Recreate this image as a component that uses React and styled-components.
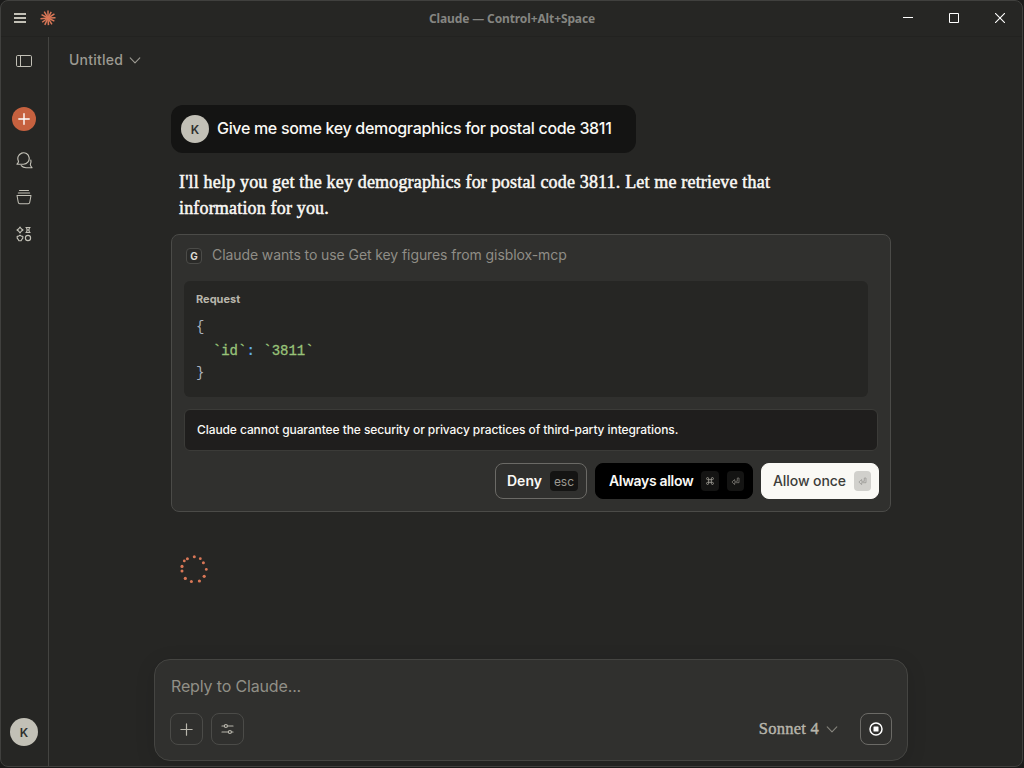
import React from "react";
import styled, { createGlobalStyle } from "styled-components";

const sans = `Inter, "Liberation Sans", sans-serif`;
const serif = `"Liberation Serif", serif`;
const mono = `"Liberation Mono", monospace`;

const GlobalStyle = createGlobalStyle`
  * { box-sizing: border-box; }
  body { margin: 0; background: #1b1b1a; overflow: hidden; }
  button { margin: 0; padding: 0; border: 0; background: none; font: inherit; color: inherit; }
  svg { display: block; flex: none; }
`;

const Backdrop = styled.div`
  width: 1024px;
  height: 768px;
  padding: 0 1px 1px 0;
  background: #1b1b1a;
`;

const Window = styled.div`
  display: flex;
  flex-direction: column;
  height: 767px;
  border: 1px solid #40403e;
  border-radius: 8px;
  background: #262624;
  color: #faf9f5;
  font-family: ${sans};
  overflow: hidden;
`;

const TitleBar = styled.header`
  display: grid;
  grid-template-columns: 1fr auto 1fr;
  align-items: center;
  height: 36px;
  flex: none;
  padding-bottom: 1px;
  border-bottom: 1px solid #222220;
`;

const TitleLeft = styled.div`
  display: flex;
  align-items: center;
  gap: 13px;
  padding-left: 12px;
`;

const Title = styled.div`
  padding: 1px 0 0 1px;
  font: 700 12px/16px "Noto Sans", sans-serif;
  letter-spacing: -0.12px;
  color: #858581;
`;

const WindowControls = styled.div`
  display: flex;
  justify-content: flex-end;
  margin-right: -1px;
`;

const ControlButton = styled.button`
  display: grid;
  place-items: center;
  width: 46px;
  height: 34px;
`;

const Shell = styled.div`
  display: flex;
  flex: 1;
  min-height: 0;
`;

const Sidebar = styled.nav`
  display: flex;
  flex-direction: column;
  align-items: center;
  width: 48px;
  flex: none;
  padding: 15px 1px 20px 0;
  border-right: 1px solid #444441;
  color: #c2c0b6;
`;

const SideButton = styled.button`
  display: grid;
  place-items: center;
  width: 32px;
  height: 18px;
  margin-top: ${(p) => p.$gap || 0}px;
`;

const NewChat = styled(SideButton)`
  width: 24px;
  height: 24px;
  border-radius: 50%;
  background: #c6613f;
  color: #fff;
`;

const Avatar = styled.div`
  display: grid;
  place-items: center;
  width: 28px;
  height: 28px;
  flex: none;
  border-radius: 50%;
  background: #c2c0b6;
  color: #30302e;
  font-size: 12px;
  font-weight: 600;
`;

const SidebarFoot = styled.div`
  margin-top: auto;
`;

const Main = styled.main`
  display: flex;
  flex-direction: column;
  flex: 1;
  min-width: 0;
`;

const ChatHeader = styled.div`
  display: flex;
  align-items: center;
  gap: 6px;
  height: 46px;
  padding: 0 0 0 20px;
  color: #9c9a92;
  font-size: 14px;
  font-weight: 500;
  letter-spacing: 0.22px;
`;

const ChatTitle = styled.span`
  padding-bottom: 2px;
`;

const Thread = styled.section`
  display: flex;
  flex-direction: column;
  align-items: flex-start;
  width: 720px;
  margin: 22px 0 0 122px;
`;

const UserMessage = styled.div`
  display: flex;
  align-items: center;
  gap: 8px;
  width: 465px;
  height: 48px;
  padding: 0 10px;
  border-radius: 12px;
  background: #141413;
  white-space: nowrap;
`;

const UserText = styled.span`
  font-size: 16px;
  font-weight: 500;
  letter-spacing: -0.317px;
  line-height: 24px;
  padding-bottom: 2px;
`;

const Reply = styled.p`
  margin: 16px 0 0;
  padding-left: 8px;
  width: 640px;
  font: 18px/26px ${serif};
  letter-spacing: 0.175px;
  -webkit-text-stroke: 0.5px currentColor;
`;

const ToolCard = styled.div`
  width: 720px;
  height: 278px;
  margin-top: 13px;
  padding: 12px;
  border: 1px solid #4b4b48;
  border-radius: 8px;
  background: #30302e;
`;

const ToolHeader = styled.div`
  display: flex;
  align-items: center;
  gap: 10px;
  height: 18px;
  padding-left: 2px;
  color: #8f8d86;
  font-size: 14px;
  letter-spacing: -0.09px;
`;

const ToolName = styled.span`
  padding-bottom: 3px;
`;

const ToolBadge = styled.span`
  display: grid;
  place-items: center;
  width: 16px;
  height: 16px;
  border: 1px solid #4b4b48;
  border-radius: 4px;
  background: #2a2a28;
  color: #dddbd2;
  font-size: 10px;
  font-weight: 700;
  letter-spacing: 0;
`;

const Request = styled.div`
  width: 684px;
  height: 116px;
  margin-top: 16px;
  padding: 11px 12px;
  border-radius: 6px;
  background: #262624;
`;

const RequestLabel = styled.div`
  color: #b8b6ac;
  font-size: 11px;
  font-weight: 700;
  line-height: 14px;
`;

const Code = styled.pre`
  margin: 9px 0 0;
  color: #abb2bf;
  font: 14px/22px ${mono};
`;

const CodeLine = styled.div`
  height: ${(p) => p.$h}px;
  line-height: ${(p) => p.$h}px;
`;

const Str = styled.span`
  color: #98c379;
  -webkit-text-stroke: 0.3px currentColor;
`;

const Op = styled.span`
  color: #61afef;
  font-weight: 700;
`;

const Warning = styled.div`
  display: flex;
  align-items: center;
  width: 694px;
  height: 42px;
  margin-top: 12px;
  padding: 0 12px 1px;
  border: 1px solid #3b3b38;
  border-radius: 6px;
  background: #1f1e1d;
  font-size: 12px;
  font-weight: 500;
  letter-spacing: -0.085px;
`;

const Actions = styled.div`
  display: flex;
  justify-content: flex-end;
  gap: 8px;
  margin: 12px -1px 0 0;
`;

const looks = {
  outline: "background:#30302e;border:1px solid #6b6a66;color:#faf9f5;",
  dark: "background:#000;border:1px solid #000;color:#faf9f5;",
  light: "background:#faf9f5;border:1px solid #faf9f5;color:#3d3d3a;",
};

const ActionButton = styled.button`
  display: flex;
  align-items: center;
  width: ${(p) => p.$w}px;
  height: 36px;
  padding-left: ${(p) => p.$pad || 11}px;
  border-radius: 8px;
  ${(p) => looks[p.$look]}
  font-size: 14px;
  font-weight: ${(p) => (p.$look === "light" ? 500 : 600)};
  letter-spacing: ${(p) => p.$track || 0}px;
  white-space: nowrap;
`;

const ActionLabel = styled.span`
  padding-bottom: 2px;
`;

const Key = styled.kbd`
  display: grid;
  place-items: center;
  width: ${(p) => p.$w || 17}px;
  height: 20px;
  margin-left: 8px;
  border-radius: 4px;
  background: ${(p) => (p.$light ? "#d1d0cc" : "#141413")};
  color: ${(p) => (p.$light ? "#8b8a86" : "#9c9a92")};
  font: 400 12px ${sans};
  letter-spacing: 0;
`;

const SpinnerBox = styled.div`
  margin: 43px 0 0 9px;
`;

const Composer = styled.section`
  display: flex;
  flex-direction: column;
  width: 754px;
  height: 102px;
  margin: auto 0 5px 105px;
  padding: 16px 15px 15px;
  border: 1px solid #454542;
  border-radius: 16px;
  background: #30302e;
  box-shadow: 0 4px 20px rgba(0, 0, 0, 0.12);
`;

const Placeholder = styled.div`
  padding-left: 1px;
  color: #918f87;
  font-size: 16px;
  letter-spacing: -0.15px;
  line-height: 21px;
`;

const Tools = styled.div`
  display: flex;
  align-items: center;
  gap: 8px;
  margin-top: auto;
`;

const ToolButton = styled.button`
  display: grid;
  place-items: center;
  width: ${(p) => p.$w || 33}px;
  height: 32px;
  border: 1px solid ${(p) => (p.$strong ? "#6b6a66" : "#4b4b48")};
  border-radius: 8px;
  color: #b8b6ac;
`;

const Model = styled.button`
  display: flex;
  align-items: center;
  gap: 7px;
  margin: 0 14px 0 auto;
  color: #b8b6ac;
  font: 16.5px ${serif};
  letter-spacing: 0.24px;
  -webkit-text-stroke: 0.4px currentColor;
`;

const Chevron = ({ color = "#9c9a92" }) => (
  <svg width="12" height="8" viewBox="0 0 12 8" fill="none" stroke={color} strokeWidth="1.1" strokeLinecap="round" strokeLinejoin="round">
    <path d="M1.2 1.9 6 6.800 10.8 1.9" />
  </svg>
);

const rays = [
  [0, 7.4], [28, 6.9], [58, 7.6], [88, 7.5], [116, 7.1], [148, 7.4],
  [176, 7.1], [205, 7.6], [234, 7.2], [264, 7.6], [298, 7.3], [330, 7.5],
];

const Burst = () => (
  <svg width="16" height="16" viewBox="0 0 16 16" stroke="#d97757" strokeWidth="1.5" strokeLinecap="butt">
    {rays.map(([angle, r]) => (
      <path key={angle} d={`M8 8V${8 - r}`} transform={`rotate(${angle} 8 8)`} />
    ))}
  </svg>
);

const Plus = ({ size = 12, weight = 1.5 }) => (
  <svg width={size} height={size} viewBox="0 0 12 12" stroke="currentColor" strokeWidth={weight} strokeLinecap="round">
    <path d="M6 .8v10.4M.8 6h10.4" />
  </svg>
);

const ReturnGlyph = () => (
  <svg width="9" height="9" viewBox="0 0 9 9" fill="none" stroke="currentColor" strokeWidth="0.7" opacity="0.85">
    <path d="M6.3 1H8v4.7H3.6V7.6L.9 5l2.7-2.5v1.8h2.7z" />
  </svg>
);

const CommandGlyph = () => (
  <svg width="8" height="8" viewBox="0 0 9 9" fill="none" stroke="currentColor" strokeWidth="1">
    <path d="M3 3V2a1.2 1.2 0 1 0-1.2 1H7.2A1.2 1.2 0 1 0 6 2v5a1.2 1.2 0 1 0 1.2-1H1.8A1.2 1.2 0 1 0 3 7z" />
  </svg>
);

const dots = [
  [14.3, 1.8, 1.5], [20.3, 3.7, 1.4], [23.4, 7.7, 1.5], [26.3, 14.4, 1.4],
  [24.2, 21.3, 1.6], [19.4, 26, 1.6], [11.4, 26.4, 1.5], [5.3, 23.4, 1.6],
  [2, 16, 1.5], [2, 11.4, 1.6], [4.3, 5.9, 1.4], [7.4, 3.8, 1.5],
];

const Spinner = () => (
  <svg width="30" height="30" viewBox="0 0 30 30" fill="#d97757">
    {dots.map(([x, y, r]) => (
      <circle key={`${x}-${y}`} cx={x} cy={y} r={r} />
    ))}
  </svg>
);

export default function App() {
  return (
    <Backdrop>
      <GlobalStyle />
      <Window>
        <TitleBar>
          <TitleLeft>
            <svg width="14" height="12" viewBox="0 0 14 12" fill="#c2c0b6">
              <path d="M1 1h12v2H1zM1 5h12v2H1zM1 9h12v2H1z" />
            </svg>
            <Burst />
          </TitleLeft>
          <Title>Claude — Control+Alt+Space</Title>
          <WindowControls>
            <ControlButton aria-label="Minimize">
              <svg width="10" height="10" fill="#fff"><path d="M0 4h10v1H0z" /></svg>
            </ControlButton>
            <ControlButton aria-label="Maximize">
              <svg width="10" height="10" fill="none" stroke="#fff"><path d="M.5.5h9v9h-9z" /></svg>
            </ControlButton>
            <ControlButton aria-label="Close">
              <svg width="10" height="10" fill="none" stroke="#fff" strokeWidth="1.1"><path d="m0 0 10 10M10 0 0 10" /></svg>
            </ControlButton>
          </WindowControls>
        </TitleBar>
        <Shell>
          <Sidebar>
            <SideButton aria-label="Toggle sidebar">
              <svg width="16" height="12" fill="none" stroke="currentColor">
                <rect x=".5" y=".5" width="15" height="11" rx="1.2" />
                <path d="M4.5.5v11" />
              </svg>
            </SideButton>
            <NewChat aria-label="New chat" $gap={37}>
              <Plus weight={1.4} />
            </NewChat>
            <SideButton aria-label="Chats" $gap={20}>
              <svg width="17" height="17" viewBox="0 0 17 17" fill="none" stroke="currentColor" strokeWidth="1.15" strokeLinejoin="round" strokeLinecap="round">
                <path d="M1 12.2h6.5a5.7 5.7 0 1 0-5-3c.1.9-.5 1.900-1.5 3z" />
                <path d="M14.8 8c.5 1.7.2 3.3-.5 4.5.2 1.2.8 2.2 1.7 3.2h-5.5c-2.2.1-4-.5-5.3-2" />
              </svg>
            </SideButton>
            <SideButton aria-label="Projects" $gap={19}>
              <svg width="16" height="16" viewBox="0 0 16 16" fill="none" stroke="currentColor" strokeWidth="1.05" strokeLinejoin="round" strokeLinecap="round">
                <path d="M3.5 1.5h9M2.3 4h11.4M1 6.5h14l-1.3 7a1.5 1.5 0 0 1-1.5 1.2H3.8a1.5 1.5 0 0 1-1.5-1.2z" />
              </svg>
            </SideButton>
            <SideButton aria-label="Artifacts" $gap={19}>
              <svg width="16" height="16" viewBox="0 0 16 16" fill="none" stroke="currentColor" strokeWidth="1.15" strokeLinejoin="round">
                <path d="M4 1 5.2 2.8 7 4 5.2 5.2 4 7 2.8 5.2 1 4l1.8-1.2z" />
                <path d="M9.5 1.5h5M9.5 6.5h5M10.5 1.5c.8 1.6.8 3.4 0 5M13.5 1.5c-.8 1.6-.8 3.4 0 5M10.8 4h2.4" />
                <path d="m4 9.3 1.3.8 1.5.2v1.9l-.9 1.1-.8 1.4H2.9l-.8-1.400-.9-1.1v-1.9l1.5-.2z" />
                <circle cx="12" cy="12" r="2.6" />
              </svg>
            </SideButton>
            <SidebarFoot>
              <Avatar>K</Avatar>
            </SidebarFoot>
          </Sidebar>
          <Main>
            <ChatHeader>
              <ChatTitle>Untitled</ChatTitle>
              <Chevron />
            </ChatHeader>
            <Thread>
              <UserMessage>
                <Avatar>K</Avatar>
                <UserText>Give me some key demographics for postal code 3811</UserText>
              </UserMessage>
              <Reply>
                I'll help you get the key demographics for postal code 3811. Let me retrieve that
                information for you.
              </Reply>
              <ToolCard>
                <ToolHeader>
                  <ToolBadge>G</ToolBadge>
                  <ToolName>Claude wants to use Get key figures from gisblox-mcp</ToolName>
                </ToolHeader>
                <Request>
                  <RequestLabel>Request</RequestLabel>
                  <Code>
                    <CodeLine $h={24}>{"{"}</CodeLine>
                    <CodeLine $h={24}>
                      {"  "}<Str>`id`</Str><Op>:</Op> <Str>`3811`</Str>
                    </CodeLine>
                    <CodeLine $h={20}>{"}"}</CodeLine>
                  </Code>
                </Request>
                <Warning>
                  Claude cannot guarantee the security or privacy practices of third-party integrations.
                </Warning>
                <Actions>
                  <ActionButton $look="outline" $w={92}>
                    <ActionLabel>Deny</ActionLabel>
                    <Key $w={28}>esc</Key>
                  </ActionButton>
                  <ActionButton $look="dark" $w={158} $pad={13} $track={-0.33}>
                    <ActionLabel>Always allow</ActionLabel>
                    <Key $w={18}><CommandGlyph /></Key>
                    <Key><ReturnGlyph /></Key>
                  </ActionButton>
                  <ActionButton $look="light" $w={118} $track={-0.07}>
                    <ActionLabel>Allow once</ActionLabel>
                    <Key $light><ReturnGlyph /></Key>
                  </ActionButton>
                </Actions>
              </ToolCard>
              <SpinnerBox>
                <Spinner />
              </SpinnerBox>
            </Thread>
            <Composer>
              <Placeholder>Reply to Claude...</Placeholder>
              <Tools>
                <ToolButton aria-label="Add"><Plus size={13} weight={1.1} /></ToolButton>
                <ToolButton aria-label="Tools">
                  <svg width="13" height="12" viewBox="0 0 13 12" fill="none" stroke="currentColor" strokeWidth="1.2" strokeLinecap="round">
                    <path d="M1 3h2.2M6.5 3H12M1 9h6.2M10.5 9H12" />
                    <circle cx="4.9" cy="3" r="1.5" />
                    <circle cx="8.9" cy="9" r="1.5" />
                  </svg>
                </ToolButton>
                <Model>
                  Sonnet 4 <Chevron color="#85837c" />
                </Model>
                <ToolButton aria-label="Stop" $w={32} $strong>
                  <svg width="14" height="14" viewBox="0 0 14 14">
                    <circle cx="7" cy="7" r="6" fill="none" stroke="#fff" strokeWidth="1.5" />
                    <rect x="4.5" y="4.5" width="5" height="5" rx=".5" fill="#fff" />
                  </svg>
                </ToolButton>
              </Tools>
            </Composer>
          </Main>
        </Shell>
      </Window>
    </Backdrop>
  );
}
